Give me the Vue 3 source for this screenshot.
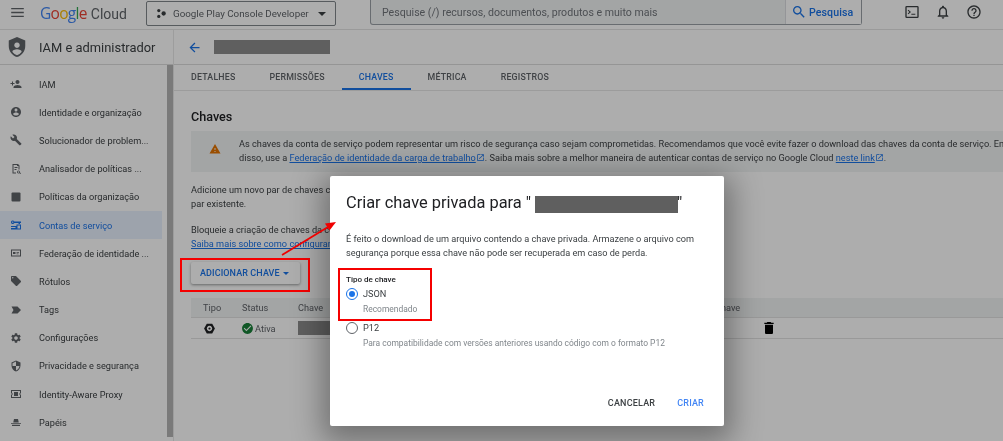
<script setup>
const nav = [
  { label: 'IAM', d: 'M15 12c2.21 0 4-1.79 4-4s-1.79-4-4-4-4 1.79-4 4 1.79 4 4 4zm-9-2V7H4v3H1v2h3v3h2v-3h3v-2H6zm9 4c-2.67 0-8 1.34-8 4v2h16v-2c0-2.66-5.33-4-8-4z' },
  { label: 'Identidade e organização', d: 'M12 2C6.48 2 2 6.48 2 12s4.48 10 10 10 10-4.48 10-10S17.52 2 12 2zm0 3c1.66 0 3 1.34 3 3s-1.34 3-3 3-3-1.34-3-3 1.34-3 3-3zm0 14.2c-2.5 0-4.71-1.28-6-3.22.03-1.99 4-3.08 6-3.08 1.99 0 5.97 1.09 6 3.08-1.29 1.94-3.5 3.22-6 3.22z' },
  { label: 'Solucionador de problem...', d: 'M22.7 19l-9.1-9.1c.9-2.3.4-5-1.5-6.9-2-2-5-2.4-7.4-1.3L9 6 6 9 1.6 4.7C.4 7.1.9 10.1 2.9 12.1c1.9 1.9 4.6 2.4 6.9 1.5l9.1 9.1c.4.4 1 .4 1.4 0l2.3-2.3c.5-.4.5-1.1.1-1.4z' },
  { label: 'Analisador de políticas ...', d: 'M5 2h11l3 3v8h-2V6h-3V4H7v15h5v2H5zM9 8h6v2H9zm0 4h4v2H9zm8 3a3 3 0 1 1-.01 0zm0 1.6a1.4 1.4 0 1 0 .01 0zM19 20l1.2-1.2 2 2L21 22z' },
  { label: 'Políticas da organização', d: 'M5 3h14a2 2 0 0 1 2 2v14a2 2 0 0 1-2 2H5a2 2 0 0 1-2-2V5a2 2 0 0 1 2-2z' },
  { label: 'Contas de serviço', active: true, d: 'M2 6.500A3.500 3.500 0 0 1 8.700 5H22v3h-2v2h-3V8H8.700A3.500 3.500 0 0 1 2 6.500zm3.500-1.300a1.300 1.300 0 1 0 .01 0zM13 11h9v10H2v-3h9v-2H2v-2h11zm2 2v6h5v-6z' },
  { label: 'Federação de identidade ...', d: 'M2 5h20v14H2zm2 2v10h16V7zm2 3h5v4H6zm7 0h5v1.600h-5zm0 3h4v1.600h-4z' },
  { label: 'Rótulos', d: 'M21.41 11.58l-9-9C12.05 2.22 11.55 2 11 2H4c-1.1 0-2 .9-2 2v7c0 .55.22 1.05.59 1.42l9 9c.36.36.86.58 1.41.58.55 0 1.05-.22 1.41-.59l7-7c.37-.36.59-.86.59-1.41 0-.55-.23-1.06-.59-1.42zM5.5 7C4.67 7 4 6.33 4 5.5S4.67 4 5.5 4 7 4.67 7 5.5 6.33 7 5.5 7z' },
  { label: 'Tags', d: 'M3 5h12l7 7-7 7H3l4-7z' },
  { label: 'Configurações', d: 'M19.14 12.94c.04-.3.06-.61.06-.94 0-.32-.02-.64-.07-.94l2.03-1.58c.18-.14.23-.41.12-.61l-1.92-3.32c-.12-.22-.37-.29-.59-.22l-2.39.96c-.5-.38-1.03-.7-1.62-.94l-.36-2.54c-.04-.24-.24-.41-.48-.41h-3.84c-.24 0-.43.17-.47.41l-.36 2.54c-.59.24-1.13.57-1.62.94l-2.39-.96c-.22-.08-.47 0-.59.22L2.74 8.87c-.12.21-.08.47.12.61l2.03 1.58c-.05.3-.09.63-.09.94s.02.64.07.94l-2.03 1.58c-.18.14-.23.41-.12.61l1.92 3.32c.12.22.37.29.59.22l2.39-.96c.5.38 1.03.7 1.62.94l.36 2.54c.05.24.24.41.48.41h3.84c.24 0 .44-.17.47-.41l.36-2.54c.59-.24 1.13-.56 1.62-.94l2.39.96c.22.08.47 0 .59-.22l1.92-3.32c.12-.22.07-.47-.12-.61l-2.01-1.58zM12 15.6c-1.98 0-3.6-1.62-3.6-3.6s1.62-3.6 3.6-3.6 3.6 1.62 3.6 3.6-1.62 3.6-3.6 3.6z' },
  { label: 'Privacidade e segurança', d: 'M12 1L3 5v6c0 5.55 3.84 10.74 9 12 5.16-1.26 9-6.45 9-12V5l-9-4zm0 10.99h7c-.53 4.12-3.28 7.79-7 8.94V12H5V6.3l7-3.11v8.8z' },
  { label: 'Identity-Aware Proxy', d: 'M2 4h20v16H2zm2 2v12h16V6zm4 2h8v8H8zM2 11h4v2H2zm16 0h4v2h-4z' },
  { label: 'Papéis', d: 'M8 6h8l1.500 7h-11zM2 14h20v1.600H2zm2 3.400h16V20H4z' }
]
const tabs = ['Detalhes', 'Permissões', 'Chaves', 'Métrica', 'Registros']
const icons = {
  terminal: 'M4 3h16a2 2 0 0 1 2 2v14a2 2 0 0 1-2 2H4a2 2 0 0 1-2-2V5a2 2 0 0 1 2-2zm0 2v14h16V5zm2.500 3.500L10.500 12l-4 3.500-1-1.200 2.600-2.300-2.600-2.300zM11 14.500h6V16h-6z',
  bell: 'M12 22c1.1 0 2-.9 2-2h-4c0 1.1.9 2 2 2zm6-6v-5c0-3.07-1.63-5.64-4.5-6.32V4c0-.83-.67-1.5-1.5-1.5s-1.5.67-1.5 1.5v.68C7.64 5.36 6 7.92 6 11v5l-2 2v1h16v-1l-2-2zm-2 1H8v-6c0-2.48 1.51-4.5 4-4.5s4 2.02 4 4.5v6z',
  help: 'M11 18h2v-2h-2v2zm1-16C6.48 2 2 6.48 2 12s4.48 10 10 10 10-4.48 10-10S17.52 2 12 2zm0 18c-4.41 0-8-3.59-8-8s3.59-8 8-8 8 3.59 8 8-3.59 8-8 8zm0-14c-2.21 0-4 1.79-4 4h2c0-1.1.9-2 2-2s2 .9 2 2c0 2-3 1.75-3 5h2c0-2.25 3-2.5 3-5 0-2.21-1.79-4-4-4z',
  more: 'M12 8c1.1 0 2-.9 2-2s-.9-2-2-2-2 .9-2 2 .9 2 2 2zm0 2c-1.1 0-2 .9-2 2s.9 2 2 2 2-.9 2-2-.9-2-2-2zm0 6c-1.1 0-2 .9-2 2s.9 2 2 2 2-.9 2-2-.9-2-2-2z',
  search: 'M15.5 14h-.79l-.28-.27C15.41 12.59 16 11.11 16 9.5 16 5.91 13.09 3 9.5 3S3 5.91 3 9.5 5.91 16 9.5 16c1.61 0 3.09-.59 4.23-1.57l.27.28v.79l5 4.99L20.49 19l-4.99-5zm-6 0C7.01 14 5 11.99 5 9.5S7.01 5 9.5 5 14 7.01 14 9.5 11.99 14 9.5 14z',
  back: 'M20 11H7.83l5.59-5.59L12 4l-8 8 8 8 1.41-1.41L7.83 13H20v-2z',
  warning: 'M1 21h22L12 2 1 21zm12-3h-2v-2h2v2zm0-4h-2v-4h2v4z',
  check: 'M12 2C6.48 2 2 6.48 2 12s4.48 10 10 10 10-4.48 10-10S17.52 2 12 2zm-2 15l-5-5 1.41-1.41L10 14.17l7.59-7.59L19 8l-9 9z',
  external: 'M19 19H5V5h7V3H5c-1.11 0-2 .9-2 2v14c0 1.1.89 2 2 2h14c1.1 0 2-.9 2-2v-7h-2v7zM14 3v2h3.59l-9.83 9.83 1.41 1.41L19 6.41V10h2V3h-7z',
  trash: 'M6 19c0 1.1.9 2 2 2h8c1.1 0 2-.9 2-2V7H6v12zM19 4h-3.5l-1-1h-5l-1 1H5v2h14V4z',
  shield: 'M12 1L3 5v6c0 5.55 3.84 10.74 9 12 5.16-1.26 9-6.45 9-12V5l-9-4zm0 6a3 3 0 1 1-.01 0zm0 7.500c2.400 0 5 1.100 5 2.400v.6a9.600 9.600 0 0 1-5 3.400 9.600 9.600 0 0 1-5-3.400v-.6c0-1.300 2.600-2.400 5-2.400z',
  gear: 'M7 3h10l5 9-5 9H7l-5-9zm5 4a5 5 0 1 0 .01 0zm0 3a2 2 0 1 1-.01 0z'
}
</script>

<template>
  <div class="page">
    <header class="topbar">
      <svg class="menu" viewBox="0 0 14 10"><path d="M0 0h14v1.400H0zM0 4.300h14v1.400H0zM0 8.600h14V10H0z" /></svg>
      <div class="logo">
        <span class="g-blue">G</span><span class="g-red">o</span><span class="g-yellow">o</span><span class="g-blue">g</span><span class="g-green">l</span><span class="g-red">e</span><span class="cloud">Cloud</span>
      </div>
      <button class="project">
        <svg class="project-icon" viewBox="0 0 10 10"><circle cx="2" cy="1.800" r="1.800" /><circle cx="2" cy="8.200" r="1.800" /><circle cx="7.400" cy="5" r="2.400" /></svg>
        <span>Google Play Console Developer</span>
        <i class="caret"></i>
      </button>
      <div class="search">
        <span class="search-hint">Pesquise (/) recursos, documentos, produtos e muito mais</span>
        <span class="search-btn">
          <svg viewBox="0 0 24 24"><path :d="icons.search" /></svg>Pesquisa
        </span>
      </div>
      <div class="tools">
        <svg viewBox="0 0 24 24"><path :d="icons.terminal" /></svg>
        <svg viewBox="0 0 24 24"><path :d="icons.bell" /></svg>
        <svg viewBox="0 0 24 24"><path :d="icons.help" /></svg>
        <svg viewBox="0 0 24 24"><path :d="icons.more" /></svg>
      </div>
    </header>

    <div class="body">
      <aside class="side">
        <div class="side-title">
          <svg viewBox="0 0 24 24"><path :d="icons.shield" /></svg>
          <span>IAM e administrador</span>
        </div>
        <div class="side-scroll">
          <nav class="nav">
            <a v-for="item in nav" :key="item.label" class="nav-item" :class="{ active: item.active }">
              <svg viewBox="0 0 24 24"><path :d="item.d" fill-rule="evenodd" /></svg>
              <span>{{ item.label }}</span>
            </a>
          </nav>
          <div class="scrollbar"></div>
        </div>
      </aside>

      <main class="main">
        <div class="main-title">
          <svg viewBox="0 0 24 24"><path :d="icons.back" /></svg>
          <span class="redact name"></span>
        </div>
        <div class="tabs">
          <span v-for="t in tabs" :key="t" class="tab" :class="{ on: t === 'Chaves' }">{{ t }}</span>
        </div>
        <section class="content">
          <h2>Chaves</h2>
          <div class="banner">
            <svg viewBox="0 0 24 24"><path :d="icons.warning" /></svg>
            <p>
              As chaves da conta de serviço podem representar um risco de segurança caso sejam comprometidas. Recomendamos que você evite fazer o download das chaves da conta de serviço. Em<br />
              disso, use a <a>Federação de identidade da carga de trabalho</a>
              <svg class="ext" viewBox="0 0 24 24"><path :d="icons.external" /></svg>. Saiba mais sobre a melhor maneira de autenticar contas de serviço no Google Cloud <a>neste link</a>
              <svg class="ext" viewBox="0 0 24 24"><path :d="icons.external" /></svg>.
            </p>
          </div>
          <p class="para">Adicione um novo par de chaves criptográficas ou faça upload de um certificado de um<br />par existente.</p>
          <p class="para second">Bloqueie a criação de chaves da conta de serviço usando políticas da organização.<br /><a>Saiba mais sobre como configurar políticas da organização</a></p>
          <button class="add">Adicionar chave<i></i></button>
          <div class="table">
            <div class="row head">
              <span class="c1">Tipo</span><span class="c2">Status</span><span class="c3">Chave</span><span class="c4">Data de criação</span><span class="c5">Chave</span>
            </div>
            <div class="row">
              <span class="c1 ico"><svg viewBox="0 0 24 24"><path :d="icons.gear" fill-rule="evenodd" /></svg></span>
              <span class="c2 status"><svg viewBox="0 0 24 24"><path :d="icons.check" /></svg>Ativa</span>
              <span class="c3"><span class="redact key"></span></span>
              <span class="c4"></span>
              <span class="c5 trash"><svg viewBox="0 0 24 24"><path :d="icons.trash" /></svg></span>
            </div>
          </div>
        </section>
      </main>
    </div>

    <div class="scrim"></div>
    <div class="mark mark-add"></div>

    <div class="dialog">
      <h1>Criar chave privada para "<span class="redact title-name"></span>"</h1>
      <p class="intro">É feito o download de um arquivo contendo a chave privada. Armazene o arquivo com<br />segurança porque essa chave não pode ser recuperada em caso de perda.</p>
      <div class="field-label">Tipo de chave</div>
      <label class="radio">
        <span class="dot on"></span><span>JSON</span>
      </label>
      <div class="hint">Recomendado</div>
      <label class="radio p12">
        <span class="dot"></span><span>P12</span>
      </label>
      <div class="hint">Para compatibilidade com versões anteriores usando código com o formato P12</div>
      <div class="actions">
        <button class="act">Cancelar</button>
        <button class="act primary">Criar</button>
      </div>
    </div>

    <div class="mark mark-json"></div>
    <svg class="arrow" viewBox="0 0 70 45">
      <path d="M1 39L47 11" stroke="#f00000" stroke-width="1.800" fill="none" />
      <path d="M55 6L44 7.500L48.500 14.500z" fill="#f00000" />
    </svg>
  </div>
</template>

<style>
html, body { margin: 0; background: #fff; }
</style>

<style scoped>
.page {
  position: relative;
  width: 1003px;
  height: 441px;
  overflow: hidden;
  background: #fff;
  color: #3c4043;
  font-family: Roboto, "Liberation Sans", sans-serif;
  filter: blur(0.45px);
}
p, h1, h2 { margin: 0; font-weight: 400; }
button { font-family: inherit; background: none; border: 0; padding: 0; }
a { color: #1a73e8; text-decoration: underline; text-underline-offset: 1px; }

.topbar {
  height: 29px;
  display: flex;
  align-items: flex-start;
  border-bottom: 1px solid #e4e4e4;
  white-space: nowrap;
}
.menu { width: 13px; height: 9px; margin: 8px 0 0 11px; fill: #5f6368; flex: none; }
.logo { width: 106px; flex: none; margin-left: 16px; font: 400 15.5px/27px "Open Sans", sans-serif; letter-spacing: -0.7px; }
.g-blue { color: #4285f4; } .g-red { color: #ea4335; } .g-yellow { color: #fbbc04; } .g-green { color: #34a853; }
.cloud { color: #5f6368; font-family: Roboto, sans-serif; font-size: 14px; letter-spacing: 0; margin-left: 4px; }
.project {
  width: 190px;
  height: 25px;
  flex: none;
  margin-top: 1px;
  box-sizing: border-box;
  border: 1px solid #80868b;
  border-radius: 2px;
  display: flex;
  align-items: center;
  padding: 0 9px 0 10px;
  color: #5f6368;
  font-size: 9.8px;
}
.project-icon { width: 9px; height: 9px; fill: #3c4043; margin-right: 7px; }
.project span { flex: 1; text-align: left; }
.caret { border: 4px solid transparent; border-top: 4.5px solid #3c4043; border-bottom: 0; }
.search {
  width: 492px;
  height: 25px;
  flex: none;
  margin-left: 34px;
  box-sizing: border-box;
  border: 1px solid #9aa0a6;
  border-top: 0;
  border-radius: 0 0 3px 3px;
  background: #f1f3f4;
  display: flex;
  align-items: center;
  justify-content: space-between;
  padding-left: 11px;
  font-size: 10.6px;
  color: #70757a;
}
.search-btn {
  height: 100%;
  width: 76px;
  box-sizing: border-box;
  border-left: 1px solid #dadce0;
  background: #fff;
  display: flex;
  align-items: center;
  padding-left: 5px;
  gap: 2px;
  color: #1a73e8;
  font-weight: 500;
  letter-spacing: .1px;
}
.search-btn svg { width: 16px; height: 16px; fill: #1a73e8; }
.tools { display: flex; gap: 15px; margin: 4px 0 0 42px; flex: none; }
.tools svg { width: 16px; height: 16px; fill: #3c4043; flex: none; }

.body { display: flex; height: 411px; }
.side { width: 173px; border-right: 1px solid #e8e8e8; flex: none; }
.side-title {
  height: 34px;
  border-bottom: 1px solid #dcdcdc;
  display: flex;
  align-items: center;
  padding-left: 6px;
  font-size: 12.9px;
  color: #3c4043;
}
.side-title svg { width: 22px; height: 22px; fill: #5f6368; margin-right: 11px; }
.side-scroll { display: flex; }
.nav { width: 162px; padding-top: 5px; flex: none; }
.nav-item {
  height: 28.2px;
  display: flex;
  align-items: center;
  padding-left: 10px;
  color: #3c4043;
  font-size: 9.2px;
  text-decoration: none;
  white-space: nowrap;
}
.nav-item svg { width: 12px; height: 12px; fill: #5f6368; margin-right: 17px; flex: none; }
.nav-item.active { background: #e8f0fe; color: #1a73e8; }
.nav-item.active svg { fill: #1a73e8; }
.scrollbar { width: 6px; height: 372px; margin-left: 5px; background: #b4b4b4; }

.main { flex: 1; min-width: 0; overflow: hidden; white-space: nowrap; }
.main-title {
  height: 34px;
  border-bottom: 1px solid #dcdcdc;
  display: flex;
  align-items: center;
  padding-left: 13px;
}
.main-title svg { width: 15px; height: 15px; fill: #1a73e8; }
.redact { display: inline-block; background: #8c8c8c; }
.name { width: 116px; height: 14px; margin-left: 12px; }
.tabs {
  height: 25px;
  border-bottom: 1px solid #e6e6e6;
  display: flex;
}
.tab {
  height: 25px;
  box-sizing: border-box;
  padding: 7px 17px 0;
  font-size: 8.8px;
  line-height: 11px;
  font-weight: 500;
  text-transform: uppercase;
  letter-spacing: .2px;
  color: #5f6368;
}
.tab.on { color: #1a73e8; border-bottom: 2px solid #1a73e8; }
.content { padding: 18px 0 0 17px; }
h2 { font-size: 12.6px; font-weight: 500; line-height: 15px; color: #202124; }
.banner {
  margin-top: 7px;
  height: 41px;
  box-sizing: border-box;
  padding: 0 0 1px 18px;
  background: #f1f3f4;
  display: flex;
  align-items: center;
}
.banner > svg { width: 12px; height: 12px; fill: #e37400; margin: 0 18px 4px 0; flex: none; }
.banner p { font-size: 9.2px; line-height: 14px; color: #3c4043; }
.ext { width: 9px; height: 9px; fill: #1a73e8; vertical-align: -1px; }
.para { margin-top: 11px; font-size: 9.2px; line-height: 14px; color: #3c4043; }
.para.second { margin-top: 12px; }
.add {
  display: flex;
  align-items: center;
  width: 109px;
  height: 22px;
  margin-top: 11px;
  padding-left: 9px;
  box-sizing: border-box;
  border-radius: 2px;
  background: #fff;
  box-shadow: 0 1px 3px rgba(60,64,67,.55);
  color: #1a73e8;
  font-size: 9px;
  font-weight: 500;
  letter-spacing: .1px;
  text-transform: uppercase;
}
.add i { margin-left: 3px; border: 3px solid transparent; border-top: 3px solid #1a73e8; border-bottom: 0; }
.table { margin-top: 14px; width: 900px; font-size: 9.2px; }
.row {
  display: grid;
  grid-template-columns: 39px 56px 160px 257px 1fr;
  align-items: center;
  height: 20px;
  border-bottom: 1px solid #e2e2e2;
  color: #5f6368;
}
.row.head { background: #f1f3f4; height: 19px; }
.row > span { padding-left: 12px; display: flex; align-items: center; }
.row .c3 { padding-left: 12px; }
.ico svg { width: 13px; height: 13px; fill: #202124; }
.status { gap: 1px; }
.status svg { width: 13px; height: 13px; fill: #188038; margin-left: -1px; }
.key { width: 60px; height: 14px; }
.trash { padding-left: 0 !important; }
.trash svg { width: 16px; height: 16px; fill: #000; margin-left: 58px; }

.scrim { position: absolute; inset: 0; background: rgba(0, 0, 0, .32); }
.mark { position: absolute; box-sizing: border-box; border: 2px solid #f50000; }
.mark-add { left: 180px; top: 258px; width: 130px; height: 34px; }
.mark-json { left: 338px; top: 268px; width: 94px; height: 53px; }

.dialog {
  position: absolute;
  left: 330px;
  top: 176px;
  width: 394px;
  height: 250px;
  box-sizing: border-box;
  padding: 16px 16px 0;
  background: #fff;
  border-radius: 2px;
  box-shadow: 0 8px 30px 8px rgba(0,0,0,.35);
  color: #3c4043;
  white-space: nowrap;
}
.dialog h1 { font-size: 16.4px; line-height: 22px; color: #202124; display: flex; align-items: center; }
.title-name { width: 143px; height: 17px; margin: 3px -1px 0 4px; background: #5f5f5f; }
.intro { margin-top: 18px; font-size: 9.16px; line-height: 14.4px; }
.field-label { margin-top: 13px; font-size: 8px; line-height: 11px; font-weight: 500; color: #202124; }
.radio { display: flex; align-items: center; gap: 5px; height: 14px; margin-top: 2px; font-size: 9.2px; color: #3c4043; }
.radio.p12 { margin-top: 5px; }
.dot {
  width: 12px;
  height: 12px;
  box-sizing: border-box;
  border: 1.3px solid #5f6368;
  border-radius: 50%;
  position: relative;
}
.dot.on { border-color: #1a73e8; }
.dot.on::after { content: ""; position: absolute; inset: 2px; border-radius: 50%; background: #1a73e8; }
.hint { margin: 2px 0 0 17px; font-size: 8.45px; line-height: 14px; color: #80868b; }
.radio + .hint { margin-top: 1px; }
.actions { display: flex; justify-content: flex-end; gap: 22px; margin: 46px 4px 0 0; }
.act { font-size: 9px; font-weight: 500; text-transform: uppercase; letter-spacing: .2px; color: #3c4043; line-height: 14px; }
.act.primary { color: #4285f4; }
.arrow { position: absolute; left: 281px; top: 216px; width: 70px; height: 45px; }
</style>
